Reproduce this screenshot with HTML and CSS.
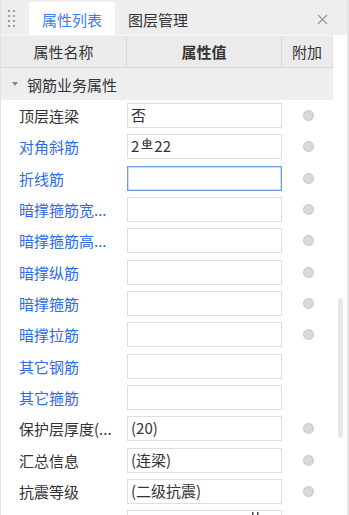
FILE: index.html
```html
<!DOCTYPE html>
<html lang="zh">
<head>
    <meta charset="UTF-8">
    <title>属性列表</title>
    <link rel="stylesheet" href="styles.css">
</head>
<body>
    <div class="panel">
        <div class="tabbar">
            <div class="grip">
                <svg width="8" height="18" viewBox="0 0 8 18">
                    <g fill="#9a9a9a">
                        <rect x="0" y="0" width="2" height="2"/><rect x="5" y="0" width="2" height="2"/>
                        <rect x="0" y="5" width="2" height="2"/><rect x="5" y="5" width="2" height="2"/>
                        <rect x="0" y="10" width="2" height="2"/><rect x="5" y="10" width="2" height="2"/>
                        <rect x="0" y="15" width="2" height="2"/><rect x="5" y="15" width="2" height="2"/>
                    </g>
                </svg>
            </div>
            <div class="tab active">属性列表</div>
            <div class="tab">图层管理</div>
            <div class="close">
                <svg width="11" height="11" viewBox="0 0 11 11"><path d="M1 1L10 10M10 1L1 10" stroke="#9a9a9a" stroke-width="1.3"/></svg>
            </div>
        </div>
        <div class="content">
            <div class="grid">
                <div class="head">
                    <div class="hcell col-name">属性名称</div>
                    <div class="hcell col-value bold">属性值</div>
                    <div class="hcell col-extra">附加</div>
                </div>
                <div class="group"><span class="caret"></span>钢筋业务属性</div>

                <div class="row">
                    <div class="label">顶层连梁</div>
                    <div class="cell"><div class="box">否</div></div>
                    <div class="extra"><span class="dot"></span></div>
                </div>
                <div class="row">
                    <div class="label blue">对角斜筋</div>
                    <div class="cell"><div class="box">2<svg class="rebar" width="12" height="12" viewBox="0 0 12 12"><g fill="none" stroke="#333" stroke-width="1.1"><path d="M6 0V10"/><rect x="2.2" y="2.8" width="7.6" height="5" rx="1.8"/><path d="M2.2 5.3H9.8M0.5 10.5H11.5"/></g></svg>22</div></div>
                    <div class="extra"><span class="dot"></span></div>
                </div>
                <div class="row">
                    <div class="label blue">折线筋</div>
                    <div class="cell"><div class="box focus"></div></div>
                    <div class="extra"><span class="dot"></span></div>
                </div>
                <div class="row">
                    <div class="label blue">暗撑箍筋宽...</div>
                    <div class="cell"><div class="box"></div></div>
                    <div class="extra"><span class="dot"></span></div>
                </div>
                <div class="row">
                    <div class="label blue">暗撑箍筋高...</div>
                    <div class="cell"><div class="box"></div></div>
                    <div class="extra"><span class="dot"></span></div>
                </div>
                <div class="row">
                    <div class="label blue">暗撑纵筋</div>
                    <div class="cell"><div class="box"></div></div>
                    <div class="extra"><span class="dot"></span></div>
                </div>
                <div class="row">
                    <div class="label blue">暗撑箍筋</div>
                    <div class="cell"><div class="box"></div></div>
                    <div class="extra"><span class="dot"></span></div>
                </div>
                <div class="row">
                    <div class="label blue">暗撑拉筋</div>
                    <div class="cell"><div class="box"></div></div>
                    <div class="extra"><span class="dot"></span></div>
                </div>
                <div class="row">
                    <div class="label blue">其它钢筋</div>
                    <div class="cell"><div class="box"></div></div>
                    <div class="extra"></div>
                </div>
                <div class="row">
                    <div class="label blue">其它箍筋</div>
                    <div class="cell"><div class="box"></div></div>
                    <div class="extra"></div>
                </div>
                <div class="row">
                    <div class="label">保护层厚度(...</div>
                    <div class="cell"><div class="box">(20)</div></div>
                    <div class="extra"><span class="dot"></span></div>
                </div>
                <div class="row">
                    <div class="label">汇总信息</div>
                    <div class="cell"><div class="box">(连梁)</div></div>
                    <div class="extra"><span class="dot"></span></div>
                </div>
                <div class="row">
                    <div class="label">抗震等级</div>
                    <div class="cell"><div class="box">(二级抗震)</div></div>
                    <div class="extra"><span class="dot"></span></div>
                </div>
                <div class="row">
                    <div class="label"></div>
                    <div class="cell">
                        <div class="box">
                            <svg class="more" width="8" height="4" viewBox="0 0 8 4"><g fill="#444"><rect x="0" y="1" width="1.5" height="3"/><rect x="5" y="1" width="1.5" height="3"/></g></svg>
                        </div>
                    </div>
                    <div class="extra"></div>
                </div>
            </div>
            <div class="track">
                <div class="thumb"></div>
            </div>
        </div>
    </div>
</body>
</html>
```

FILE: styles.css
```css
html, body {
    margin: 0;
    padding: 0;
}
body {
    width: 349px;
    height: 515px;
    overflow: hidden;
    background: #fff;
    font-family: "Noto Sans CJK SC", "Microsoft YaHei", sans-serif;
    font-size: 15px;
    color: #333;
}
.panel {
    width: 349px;
    height: 515px;
    box-sizing: border-box;
    border-left: 1px solid #e2e2e2;
    border-right: 2px solid #e4e4e4;
    overflow: hidden;
}

/* tabs */
.tabbar {
    display: flex;
    align-items: flex-end;
    height: 35px;
    background: #eeeeee;
}
.grip {
    width: 28px;
    height: 33px;
    display: flex;
    align-items: center;
    padding-left: 7px;
    box-sizing: border-box;
}
.tab {
    height: 33px;
    line-height: 36px;
    padding: 0 13px;
    color: #333;
}
.tab.active {
    background: #fff;
    color: #3b7cf0;
}
.close {
    margin-left: auto;
    height: 33px;
    width: 30px;
    display: flex;
    align-items: center;
    justify-content: flex-start;
    padding-top: 2px;
    box-sizing: border-box;
}

/* table */
.content {
    display: flex;
}
.grid {
    width: 332px;
}
.head {
    display: flex;
    height: 33px;
    background: #ebebeb;
    border-top: 1px solid #f6f6f6;
    border-bottom: 1px solid #d9d9d9;
    box-sizing: border-box;
}
.hcell {
    display: flex;
    align-items: center;
    justify-content: center;
    box-sizing: border-box;
    color: #333;
}
.col-name {
    width: 126px;
    border-right: 1px solid #d9d9d9;
}
.col-value {
    width: 155px;
    border-right: 1px solid #d9d9d9;
}
.col-extra {
    width: 51px;
    border-right: 1px solid #e2e2e2;
}
.bold {
    font-weight: bold;
}
.group {
    height: 32px;
    display: flex;
    align-items: center;
    background: #eeeeee;
    padding-left: 26px;
    position: relative;
    color: #333;
}
.caret {
    position: absolute;
    left: 11px;
    top: 14px;
    border-left: 3px solid transparent;
    border-right: 3px solid transparent;
    border-top: 4px solid #8a8a8a;
}
.row {
    display: flex;
    height: 31.33px;
    align-items: center;
}
.label {
    width: 126px;
    padding-left: 18px;
    box-sizing: border-box;
    white-space: nowrap;
    color: #333;
}
.label.blue {
    color: #2f6ae6;
}
.cell {
    width: 155px;
}
.box {
    width: 155px;
    height: 25px;
    box-sizing: border-box;
    border: 1px solid #dedede;
    background: #fff;
    line-height: 22px;
    padding-left: 3px;
    color: #333;
    position: relative;
}
.box.focus {
    border: 1px solid #6f9be9;
    box-shadow: inset 0 0 0 0.5px #9dbcf0;
}
.rebar {
    vertical-align: 2px;
    margin: 0 1px 0 2px;
}
.more {
    position: absolute;
    left: 124px;
    top: 0;
}
.extra {
    width: 51px;
    display: flex;
    justify-content: center;
}
.dot {
    width: 9px;
    height: 9px;
    border-radius: 50%;
    background: #dadada;
    border: 1px solid #c6c6c6;
    margin-left: 1px;
}
.track {
    width: 14px;
}
.thumb {
    margin-top: 263px;
    margin-left: 5px;
    width: 5px;
    height: 140px;
    border-radius: 3px;
    background: #e6e6e6;
}
```
